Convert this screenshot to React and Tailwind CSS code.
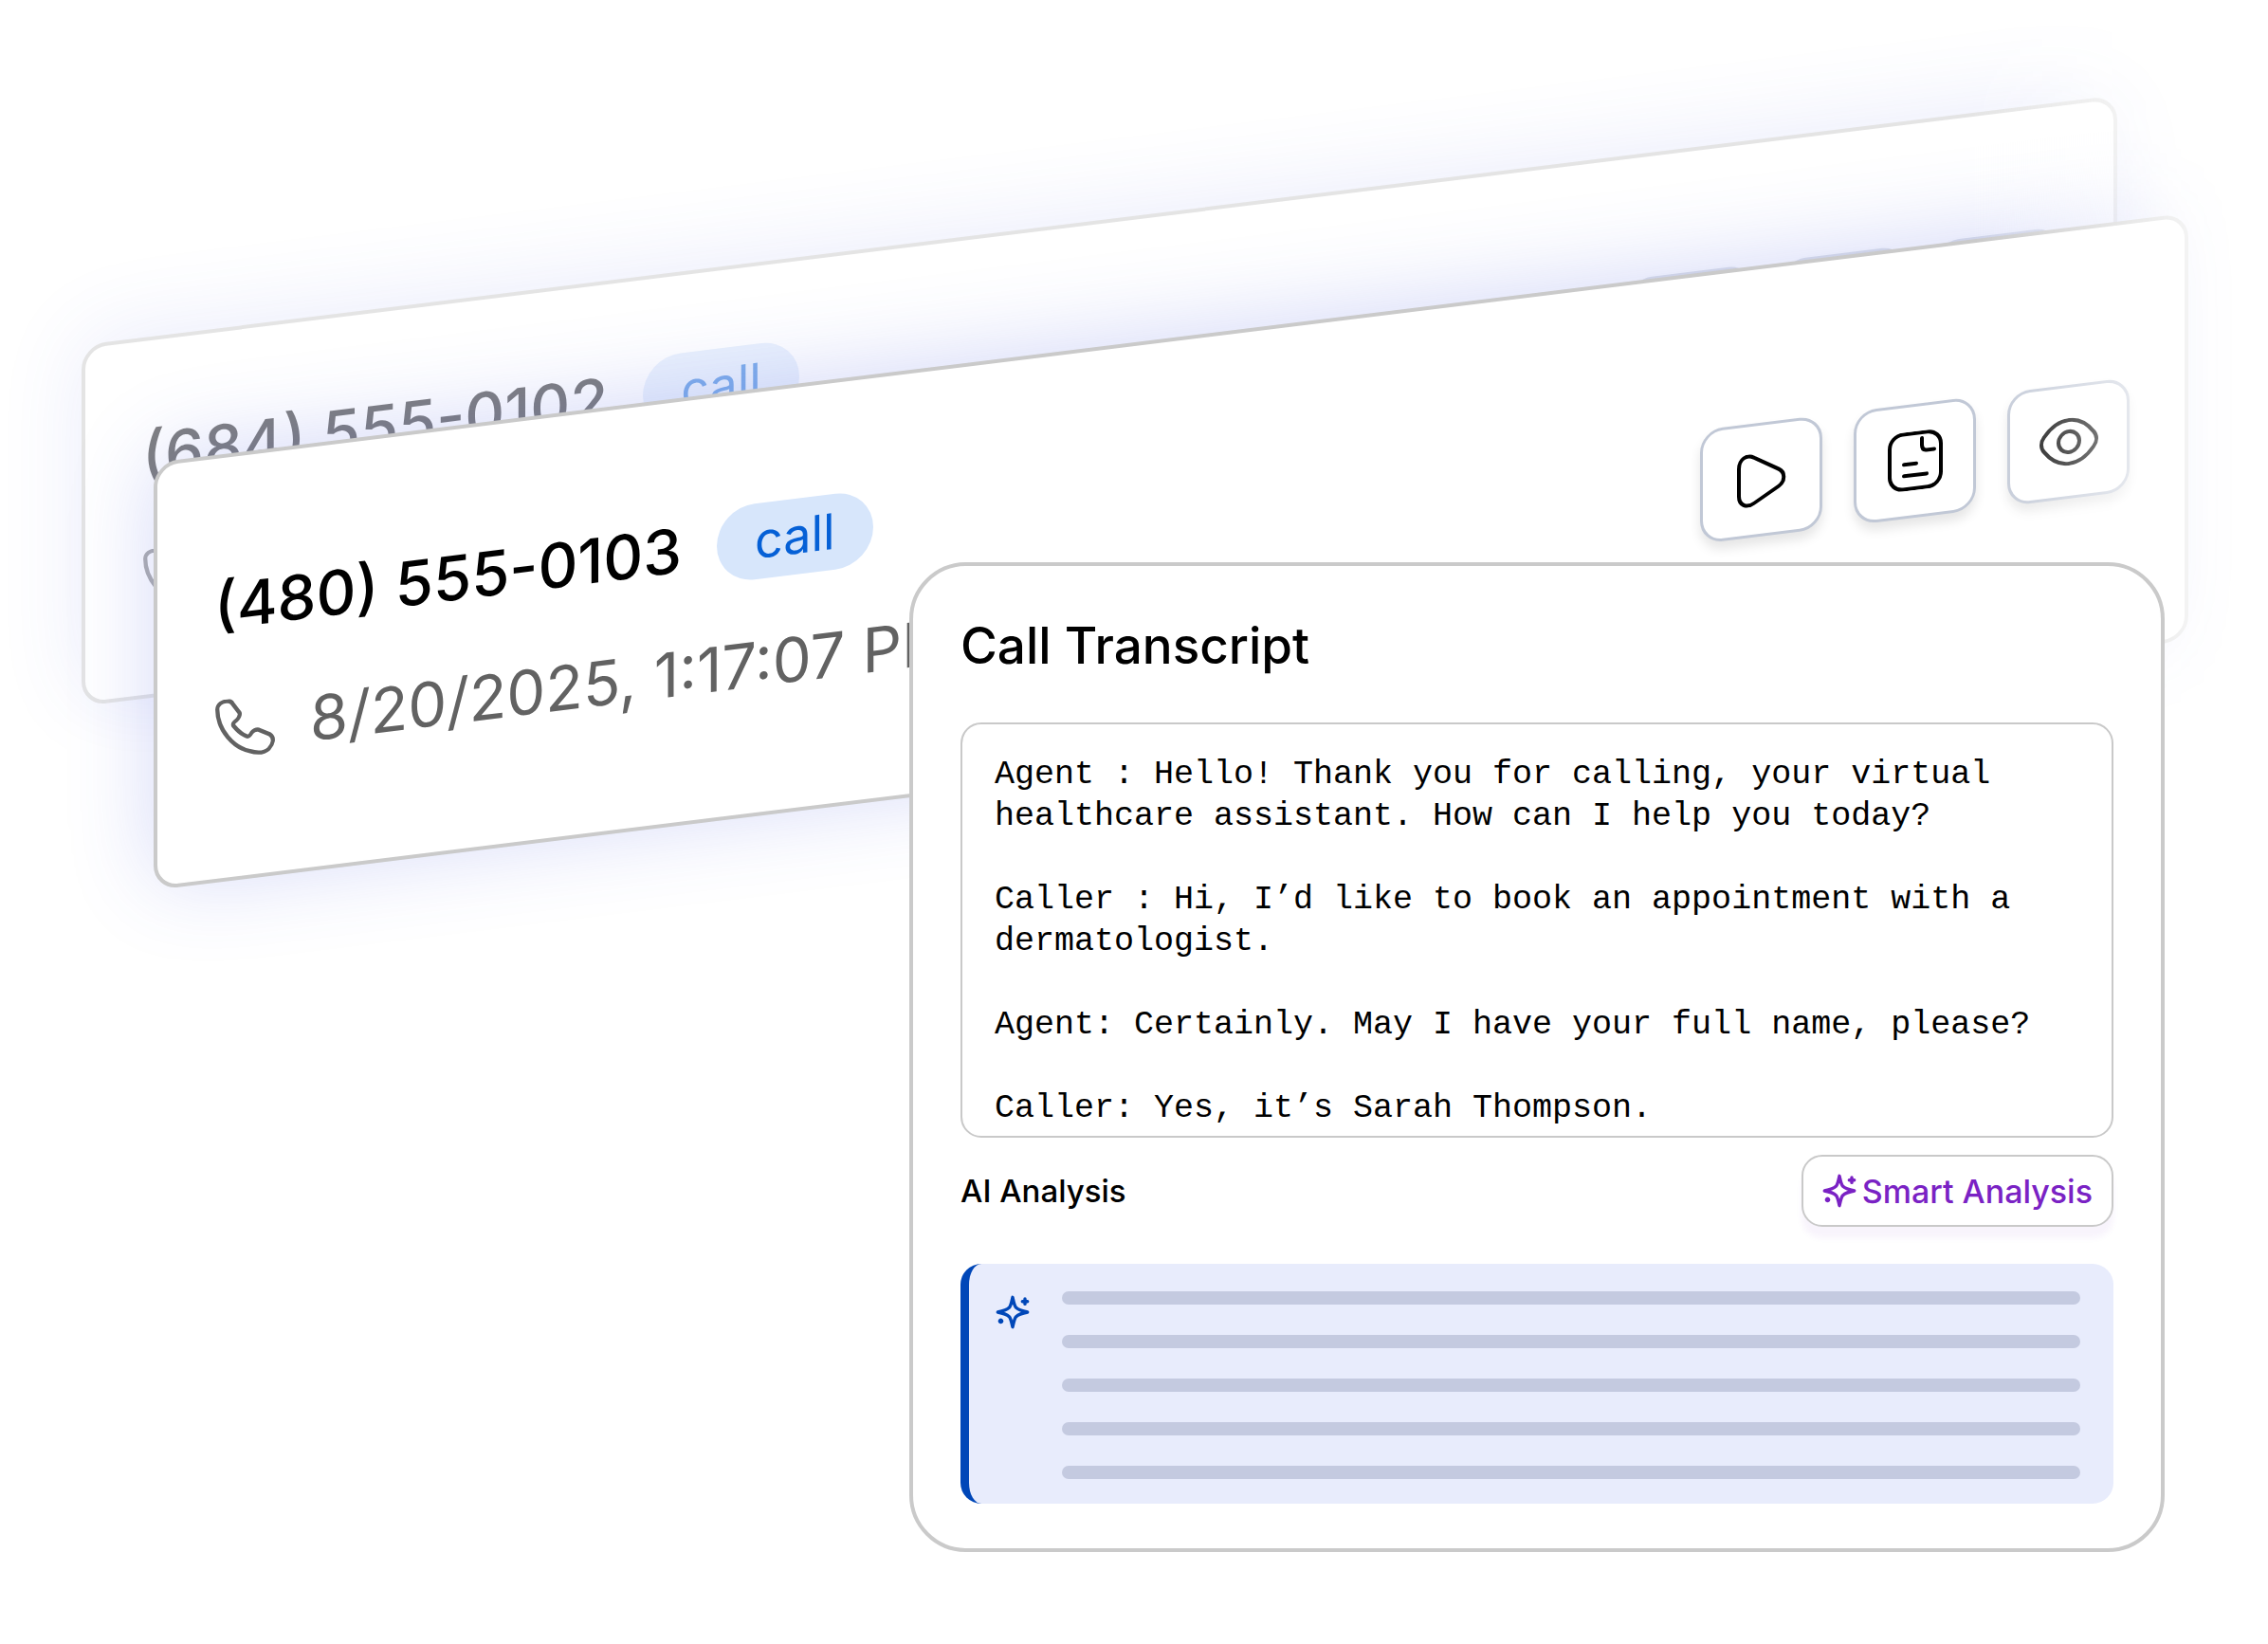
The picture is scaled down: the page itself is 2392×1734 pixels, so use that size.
const TRANSCRIPT = `Agent : Hello! Thank you for calling, your virtual
healthcare assistant. How can I help you today?

Caller : Hi, I’d like to book an appointment with a
dermatologist.

Agent: Certainly. May I have your full name, please?

Caller: Yes, it’s Sarah Thompson.`;

const SparkleIcon = () => (
  <svg viewBox="0 0 36 36" fill="none" stroke="currentColor" strokeWidth="3.4" strokeLinecap="round" strokeLinejoin="round" className="size-9 shrink-0">
    <path d="M18 2.300c1.300 5.800 2 9.400 3.600 10.900 1.600 1.700 5.300 3.400 12.100 4.800-6.800 1.400-10.500 3.100-12.100 4.800-1.600 1.500-2.300 5.100-3.600 10.900-1.300-5.800-2-9.400-3.600-10.900C12.800 21.100 9.100 19.400 2.300 18c6.800-1.400 10.500-3.100 12.100-4.800C16 11.700 16.700 8.100 18 2.300z" />
    <path d="M31 4v5.400M28.300 6.700h5.400" />
    <path d="M5.500 26.700v1.400M4.800 27.400h1.400" strokeWidth="4.4" />
  </svg>
);

const PhoneIcon = () => (
  <svg viewBox="1 0 60 60" fill="none" stroke="currentColor" strokeWidth="4" strokeLinejoin="round" className="size-16 shrink-0">
    <path d="M4 9c0-5 5-8 10-7 2 0 4 1 5 3l7 10c1 3-1 5-3 7-3 2-4 3-3 5 3 4 9 10 13 12 2 1 3 0 5-3 2-2 4-3 7-2l11 6c5 4 3 10-1 14-5 4-12 3-19 0C21 49 4 30 4 9z" />
  </svg>
);

const PlayIcon = () => (
  <svg viewBox="0 0 52 56" fill="none" stroke="currentColor" strokeWidth="4" strokeLinejoin="round" className="h-14 w-13">
    <path d="M2 14C2 4 10-1 18 4l26 15c7 4 7 14 0 18L18 52C10 57 2 52 2 43z" />
  </svg>
);

const NoteIcon = () => (
  <svg viewBox="0 0 58 62" fill="none" stroke="currentColor" strokeWidth="4" strokeLinecap="round" strokeLinejoin="round" className="h-[62px] w-[58px]">
    <rect x="2" y="2" width="54" height="58" rx="14" />
    <path d="M36 8v7c0 4 2 6 5 6h8M17 34h13M17 46h24" />
  </svg>
);

const EyeIcon = () => (
  <svg viewBox="0 0 62 50" fill="none" stroke="currentColor" strokeWidth="4" className="h-[50px] w-[62px]">
    <path d="M31 2c12 0 20 7 26 15 4 5 4 11 0 16-6 8-14 15-26 15S11 41 5 33c-4-5-4-11 0-16C11 9 19 2 31 2z" />
    <circle cx="31" cy="25" r="11" />
  </svg>
);

const ACTIONS = [
  { label: 'Play recording', Icon: PlayIcon },
  { label: 'View transcript', Icon: NoteIcon },
  { label: 'View details', Icon: EyeIcon },
];

const CallCard = ({ phone, date, className }) => (
  <article
    className={`origin-top-left -skew-y-7 self-start [grid-area:1/1] flex items-center justify-between rounded-[26px] border-4 border-[#cacaca] bg-white pr-[58px] pl-[60px] shadow-[0_-6px_90px_rgba(70,85,225,0.22)] ${className}`}
  >
    <div className="flex flex-col gap-[50px]">
      <div className="flex h-20 items-center gap-[37px]">
        <h2 className="text-[65px] leading-20 font-medium whitespace-nowrap text-black">{phone}</h2>
        <span className="rounded-full bg-[#d7e6fb] px-10 text-[52px] leading-20 text-[#0560d6]">call</span>
      </div>
      <div className="flex h-20 items-center gap-[37px] text-[#626262]">
        <PhoneIcon />
        <time className="text-[65px] leading-20 whitespace-nowrap">{date}</time>
      </div>
    </div>
    <div className="flex gap-[33px]">
      {ACTIONS.map(({ label, Icon }) => (
        <button
          key={label}
          type="button"
          aria-label={label}
          className="flex h-[120px] w-[129px] items-center justify-center rounded-3xl border-3 border-[#c1c8d6] bg-white text-black shadow-[0_8px_12px_rgba(0,0,0,0.1)]"
        >
          <Icon />
        </button>
      ))}
    </div>
  </article>
);

const TranscriptPanel = () => (
  <section className="z-10 mt-[593px] mr-[109px] mb-24 ml-[959px] self-start rounded-[60px] border-4 border-[#cacaca] bg-white px-[50px] pb-[47px] [grid-area:1/1]">
    <h1 className="pt-[50px] pb-[47px] text-[53px] leading-17 font-medium text-black">Call Transcript</h1>
    <pre className="overflow-hidden rounded-[22px] border-2 border-[#c9c9c9] px-[34px] pt-[31px] pb-[7px] font-['Liberation_Mono',monospace] text-[35px] leading-11 text-black">
      {TRANSCRIPT}
    </pre>
    <div className="mt-[18px] flex items-center justify-between">
      <h2 className="text-[33px] leading-11 font-medium text-black">AI Analysis</h2>
      <button
        type="button"
        className="flex h-19 items-center gap-1.5 rounded-[22px] border-2 border-[#c9c9c9] bg-white px-5 text-[34px] font-medium whitespace-nowrap text-[#7a22c4] shadow-[0_12px_6px_rgba(122,34,196,0.05)]"
      >
        <SparkleIcon />
        Smart Analysis
      </button>
    </div>
    <div className="mt-[39px] flex gap-[34px] rounded-[22px] border-l-9 border-[#0047b8] bg-[#e8ecfc] pt-[29px] pr-[35px] pb-[26px] pl-7 text-[#0047b8]">
      <div className="pt-1">
        <SparkleIcon />
      </div>
      <div className="flex flex-1 flex-col gap-8">
        {[1, 2, 3, 4, 5].map((line) => (
          <div key={line} className="h-3.5 rounded-full bg-[#c4cae0]" />
        ))}
      </div>
    </div>
  </section>
);

const App = () => (
  <main className="grid min-h-screen overflow-hidden bg-white font-['Inter',sans-serif]">
    <div className="grid [grid-area:1/1] [mask-image:linear-gradient(to_left,transparent_20px,black_310px)]">
      <CallCard phone="(684) 555-0102" date="8/20/2025, 1:17:07 PM" className="mt-[364px] mr-[159px] ml-[86px] h-[381px] opacity-50" />
      <CallCard phone="(480) 555-0103" date="8/20/2025, 1:17:07 PM" className="mt-[488px] mr-[84px] ml-[162px] h-[451px]" />
    </div>
    <TranscriptPanel />
  </main>
);

export default App;
